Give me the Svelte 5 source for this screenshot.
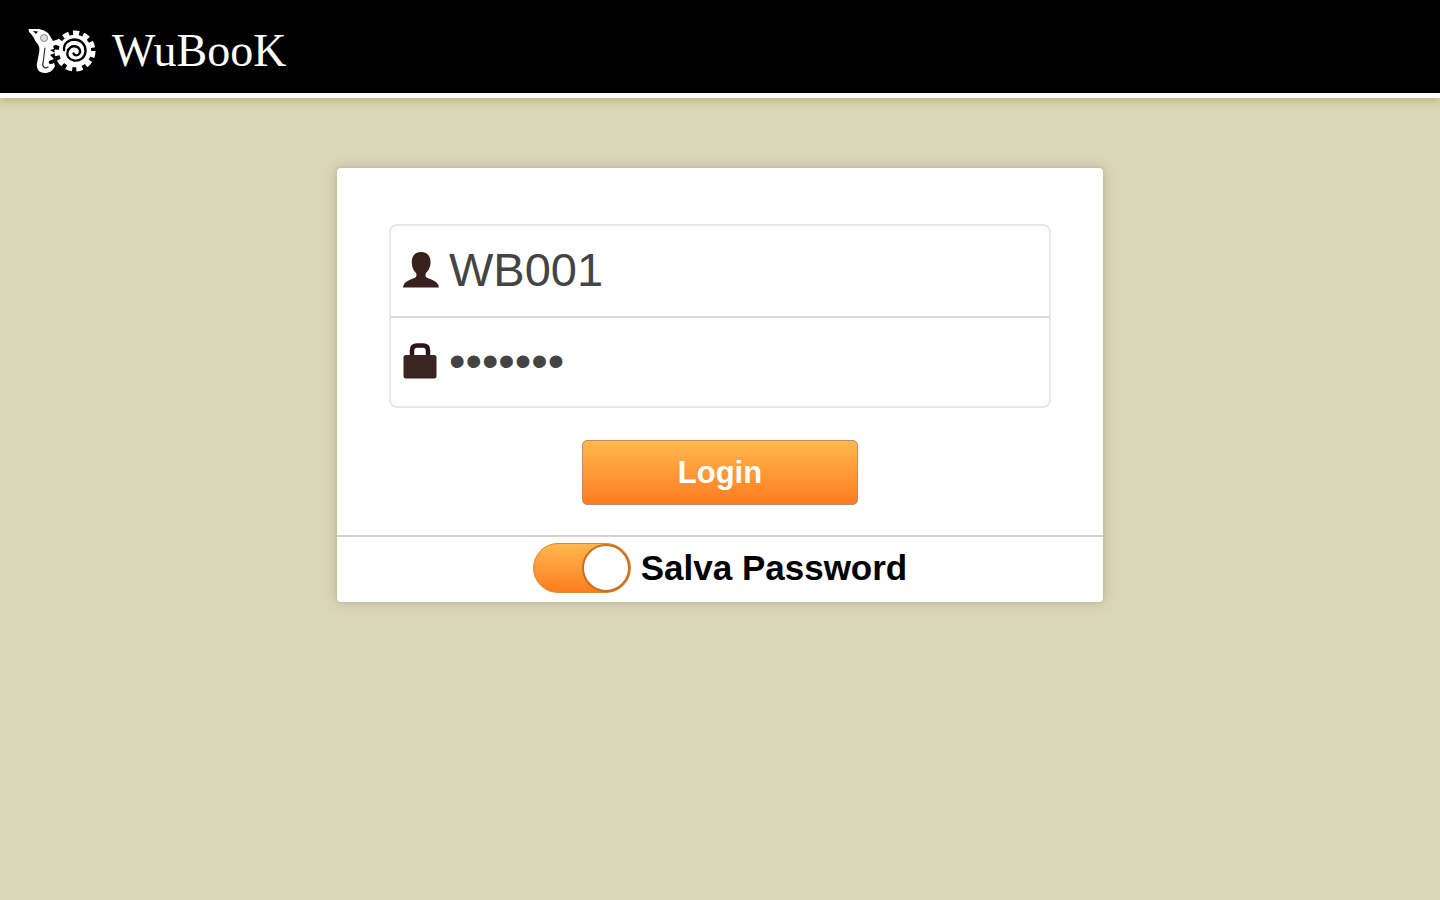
<script lang="ts">
	// Login page: brand bar, credentials card and "save password" switch

	let username = $state('WB001');
	let password = $state('wubook1');
	let savePassword = $state(true);

	function handleSubmit(event: SubmitEvent) {
		event.preventDefault();
	}
</script>

<header class="topbar">
	<a class="brand" href="/">
		<svg class="brand-mark" viewBox="0 0 68 46" aria-hidden="true">
			<!-- gear shell -->
			<circle cx="47" cy="23" r="16.200" fill="#fff" />
			<circle
				cx="47"
				cy="23"
				r="17.500"
				fill="none"
				stroke="#fff"
				stroke-width="6"
				stroke-dasharray="6 4"
			/>
			<path
				d="M36 22C35.500 15 41 11.500 47 11.500C53.500 12 58 17 57.500 23.500C57 29.500 52 33.500 46 32.500C41 31.500 38.500 28 39.500 24C40.500 19.500 44 17.500 48 18.500C51.500 19.500 53 23 51.500 25.500C50 28 46.500 28 45.500 25.500"
				fill="none"
				stroke="#000"
				stroke-width="2.400"
				stroke-linecap="round"
			/>
			<!-- head and tail -->
			<path
				d="M0.500 1L11 1C16 2 20 4 22 8L25 13L31 11L30 16L25 18L26 21L22 22L27 25L22 27L26 31L21 33C20 36 22 37 26 35L27 38C25 43 21 45 17 45C11 45 8 41 9 35L11 25C12 20 11 17 8 14C6 11 5 7 1 4Z"
				fill="#fff"
			/>
			<path
				d="M17 20C16 25 16 30 15 35C14 39 17 41 20 39"
				fill="none"
				stroke="#333"
				stroke-width="1.200"
				stroke-linecap="round"
			/>
			<circle cx="16" cy="10" r="3.500" fill="#ddd" stroke="#888" stroke-width="1" />
			<path d="M5 3L10 3.500L8 6Z" fill="#000" />
		</svg>
		<span class="brand-name">WuBooK</span>
	</a>
</header>

<main>
	<form class="card" onsubmit={handleSubmit}>
		<div class="credentials">
			<div class="fields">
				<div class="field">
					<label for="username" aria-label="Username">
						<svg viewBox="0 0 36 36" aria-hidden="true">
							<path
								d="M18 0C24 0 28 4 27.500 11C27.300 16 25 19 23 21C22 23 22.500 25 24.500 26C30 28 35.500 30 36 35.500H0C0.500 30 6 28 11.500 26C13.500 25 14 23 13 21C11 19 9 16 8.800 11C8.500 4 12 0 18 0Z"
								fill="#38201d"
							/>
						</svg>
					</label>
					<input id="username" type="text" autocomplete="username" bind:value={username} />
				</div>
				<div class="field">
					<label for="password" aria-label="Password">
						<svg viewBox="0 0 36 36" aria-hidden="true">
							<path
								d="M9 14V7.500Q9 2.500 14 2.500H20Q25 2.500 25 7.500V14"
								fill="none"
								stroke="#2b1413"
								stroke-width="4.500"
							/>
							<rect x="0.500" y="12" width="33" height="23.500" rx="2.500" fill="#3c2422" />
						</svg>
					</label>
					<input
						id="password"
						type="password"
						autocomplete="current-password"
						bind:value={password}
					/>
				</div>
			</div>
			<button type="submit">Login</button>
		</div>
		<div class="remember">
			<input id="save-password" type="checkbox" role="switch" bind:checked={savePassword} />
			<label for="save-password">Salva Password</label>
		</div>
	</form>
</main>

<style>
	:global(body) {
		margin: 0;
		background: #dad6b8;
		font-family: 'Liberation Sans', Arial, sans-serif;
	}

	.topbar {
		display: flex;
		align-items: center;
		box-sizing: border-box;
		height: 98px;
		padding: 8px 28px 0;
		background: #000;
		border-bottom: 5px solid #fff;
		box-shadow: 0 2px 10px #b8ae68;
	}

	.brand {
		display: flex;
		align-items: center;
		gap: 16px;
		color: #fff;
		text-decoration: none;
	}

	.brand-mark {
		width: 68px;
		height: 46px;
	}

	.brand-name {
		font-family: 'Liberation Serif', 'Times New Roman', serif;
		font-size: 46px;
		line-height: 48px;
	}

	main {
		padding: 70px 24px;
	}

	.card {
		box-sizing: border-box;
		width: 100%;
		max-width: 766px;
		margin: 0 auto;
		background: #fff;
		border-radius: 4px;
		box-shadow:
			0 0 3px #bdb275,
			0 0 14px #b9b5a6;
	}

	.credentials {
		display: flex;
		flex-direction: column;
		align-items: center;
		gap: 32px;
		padding: 56px 52px 30px;
	}

	.fields {
		box-sizing: border-box;
		width: 100%;
		border: 2px solid #e8e8e8;
		border-radius: 8px;
	}

	.field {
		display: flex;
		align-items: center;
		gap: 10px;
		box-sizing: border-box;
		height: 90px;
		padding: 0 12px 2px;
	}

	.field + .field {
		border-top: 2px solid #d9d9d9;
	}

	.field label {
		display: flex;
	}

	.field svg {
		width: 36px;
		height: 36px;
	}

	.field input {
		flex: 1;
		min-width: 0;
		padding: 0;
		border: none;
		outline: none;
		background: none;
		color: #444;
		font-family: inherit;
		font-size: 47px;
		line-height: 54px;
	}

	button {
		box-sizing: border-box;
		width: 276px;
		max-width: 100%;
		height: 65px;
		border: 1px solid #c08a6a;
		border-radius: 5px;
		background: linear-gradient(#ffb84f, #ff7c1f);
		color: #fff;
		font-family: inherit;
		font-size: 31px;
		font-weight: bold;
		cursor: pointer;
	}

	.remember {
		display: flex;
		align-items: center;
		justify-content: center;
		gap: 10px;
		box-sizing: border-box;
		height: 67px;
		padding-bottom: 3px;
		border-top: 2px solid #d4d4d4;
	}

	.remember input {
		appearance: none;
		box-sizing: border-box;
		width: 98px;
		height: 50px;
		margin: 0;
		border: 1px solid #d98a30;
		border-radius: 25px;
		background: #ddd;
		cursor: pointer;
	}

	.remember input::before {
		content: '';
		display: block;
		box-sizing: border-box;
		width: 48px;
		height: 48px;
		border: 2px solid #c96f1c;
		border-radius: 50%;
		background: #fff;
	}

	.remember input:checked {
		background: linear-gradient(#ffb84f, #ff7c1f);
	}

	.remember input:checked::before {
		margin-left: auto;
	}

	.remember label {
		color: #000;
		font-size: 35px;
		font-weight: bold;
		line-height: 40px;
	}
</style>
